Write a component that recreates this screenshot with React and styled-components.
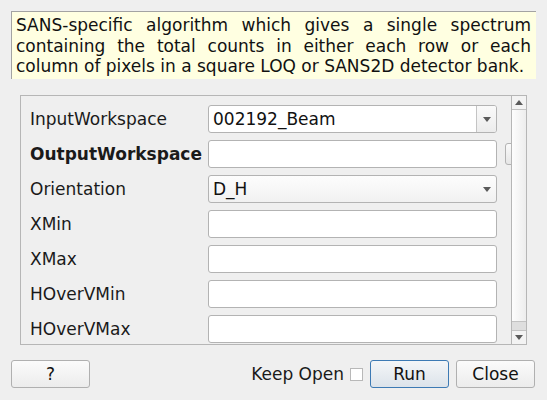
import React from 'react';
import styled, { createGlobalStyle } from 'styled-components';

const GlobalStyle = createGlobalStyle`
  html, body {
    margin: 0;
    padding: 0;
    background: #efefef;
  }
  body {
    font-family: 'DejaVu Sans', 'Liberation Sans', sans-serif;
    font-size: 17px;
    color: #1a1a1a;
  }
`;

const rows = [
  { label: 'InputWorkspace', kind: 'editcombo', value: '002192_Beam' },
  { label: 'OutputWorkspace', kind: 'text', bold: true, extra: true },
  { label: 'Orientation', kind: 'combo', value: 'D_H' },
  { label: 'XMin', kind: 'text' },
  { label: 'XMax', kind: 'text' },
  { label: 'HOverVMin', kind: 'text' },
  { label: 'HOverVMax', kind: 'text' },
];

const Arrow = ({ up }) => (
  <svg width="8" height="5" viewBox="0 0 8 5">
    <path d={up ? 'M0 5 L4 0 L8 5 Z' : 'M0 0 L8 0 L4 5 Z'} fill="#5a5a5a" />
  </svg>
);

const App = () => {
  return (
    <>
      <GlobalStyle />
      <Window>
        <Description>
          SANS-specific algorithm which gives a single spectrum containing the
          total counts in either each row or each column of pixels in a square
          LOQ or SANS2D detector bank.
        </Description>

        <ScrollArea>
          <Content>
            {rows.map((r) => (
              <Row key={r.label}>
                <Label $bold={r.bold}>{r.label}</Label>
                {r.kind === 'text' && <Field />}
                {r.kind === 'editcombo' && (
                  <Field>
                    <FieldText>{r.value}</FieldText>
                    <DropButton $separated>
                      <Arrow />
                    </DropButton>
                  </Field>
                )}
                {r.kind === 'combo' && (
                  <Combo>
                    <FieldText>{r.value}</FieldText>
                    <DropButton>
                      <Arrow />
                    </DropButton>
                  </Combo>
                )}
                {r.extra && <SideButton />}
              </Row>
            ))}
          </Content>
          <ScrollBar>
            <ScrollStep $top>
              <Arrow up />
            </ScrollStep>
            <Handle />
            <Trough />
            <ScrollStep>
              <Arrow />
            </ScrollStep>
          </ScrollBar>
        </ScrollArea>

        <Footer>
          <Button $width={79}>?</Button>
          <Spacer />
          <KeepOpen>
            Keep Open
            <Check />
          </KeepOpen>
          <Button $width={79} $default>Run</Button>
          <Button $width={79}>Close</Button>
        </Footer>
      </Window>
    </>
  );
};

const Window = styled.div`
  width: 547px;
  height: 400px;
  display: flex;
  flex-direction: column;
  box-sizing: border-box;
  overflow: hidden;
`;

const Description = styled.div`
  margin: 11px 11px 0 11px;
  height: 68px;
  box-sizing: border-box;
  background: #ffffe1;
  border-top: 1px solid #a3a3a3;
  border-left: 1px solid #a3a3a3;
  padding: 3px 5px 0 4px;
  font-size: 17px;
  line-height: 20.5px;
  text-align: justify;
  color: #111;
`;

const ScrollArea = styled.div`
  margin: 16px 20px 0 20px;
  height: 250px;
  box-sizing: border-box;
  border: 1px solid #b6b6b6;
  display: flex;
  background: #efefef;
`;

const Content = styled.div`
  flex: 1;
  overflow: hidden;
  padding: 9px 0 0 9px;
  display: flex;
  flex-direction: column;
  gap: 7px;
`;

const Row = styled.div`
  display: grid;
  grid-template-columns: 170px 289px 30px;
  column-gap: 8px;
  height: 28px;
  align-items: center;
  flex-shrink: 0;
`;

const Label = styled.div`
  font-weight: ${(p) => (p.$bold ? 'bold' : 'normal')};
  color: #1a1a1a;
  white-space: nowrap;
`;

const Field = styled.div`
  height: 28px;
  box-sizing: border-box;
  border: 1px solid #b3b3b3;
  border-radius: 3px;
  background: #fff;
  display: flex;
  align-items: center;
  overflow: hidden;
`;

const Combo = styled(Field)`
  background: linear-gradient(#fdfdfd, #f1f1f1);
`;

const FieldText = styled.div`
  flex: 1;
  padding-left: 4px;
  color: #111;
`;

const DropButton = styled.div`
  width: 19px;
  height: 100%;
  display: flex;
  align-items: center;
  justify-content: center;
  border-left: ${(p) => (p.$separated ? '1px solid #c4c4c4' : 'none')};
  background: ${(p) => (p.$separated ? 'linear-gradient(#fafafa, #ececec)' : 'transparent')};
`;

const SideButton = styled.div`
  height: 22px;
  box-sizing: border-box;
  border: 1px solid #b3b3b3;
  border-radius: 3px;
  background: linear-gradient(#fafafa, #e6e6e6);
`;

const ScrollBar = styled.div`
  width: 14px;
  border-left: 1px solid #b6b6b6;
  display: flex;
  flex-direction: column;
  background: #f4f4f4;
`;

const ScrollStep = styled.div`
  height: 14px;
  flex-shrink: 0;
  display: flex;
  align-items: center;
  justify-content: center;
  background: #f3f3f3;
  border-bottom: ${(p) => (p.$top ? '1px solid #c2c2c2' : 'none')};
  border-top: ${(p) => (p.$top ? 'none' : '1px solid #c2c2c2')};
  box-sizing: border-box;
`;

const Handle = styled.div`
  flex: 1;
  background: linear-gradient(90deg, #fdfdfd, #ededed);
  border-bottom: 1px solid #c2c2c2;
`;

const Trough = styled.div`
  height: 8px;
  background: #dedede;
`;

const Footer = styled.div`
  margin: 15px 12px 0 11px;
  height: 28px;
  display: flex;
  align-items: center;
`;

const Spacer = styled.div`
  flex: 1;
`;

const Button = styled.div`
  width: ${(p) => p.$width}px;
  height: 28px;
  box-sizing: border-box;
  border: 1px solid ${(p) => (p.$default ? '#3d7ab4' : '#b0b0b0')};
  border-radius: 3px;
  background: ${(p) =>
    p.$default
      ? 'linear-gradient(#f4f6f8, #dce3ea)'
      : 'linear-gradient(#fbfbfb, #ececec)'};
  display: flex;
  align-items: center;
  justify-content: center;
  color: #111;
  & + & {
    margin-left: 7px;
  }
`;

const KeepOpen = styled.label`
  display: flex;
  align-items: center;
  gap: 6px;
  color: #1a1a1a;
  margin-right: 7px;
`;

const Check = styled.span`
  width: 13px;
  height: 13px;
  box-sizing: border-box;
  border: 1px solid #b8b8b8;
  background: #fff;
  display: inline-block;
`;

export default App;
